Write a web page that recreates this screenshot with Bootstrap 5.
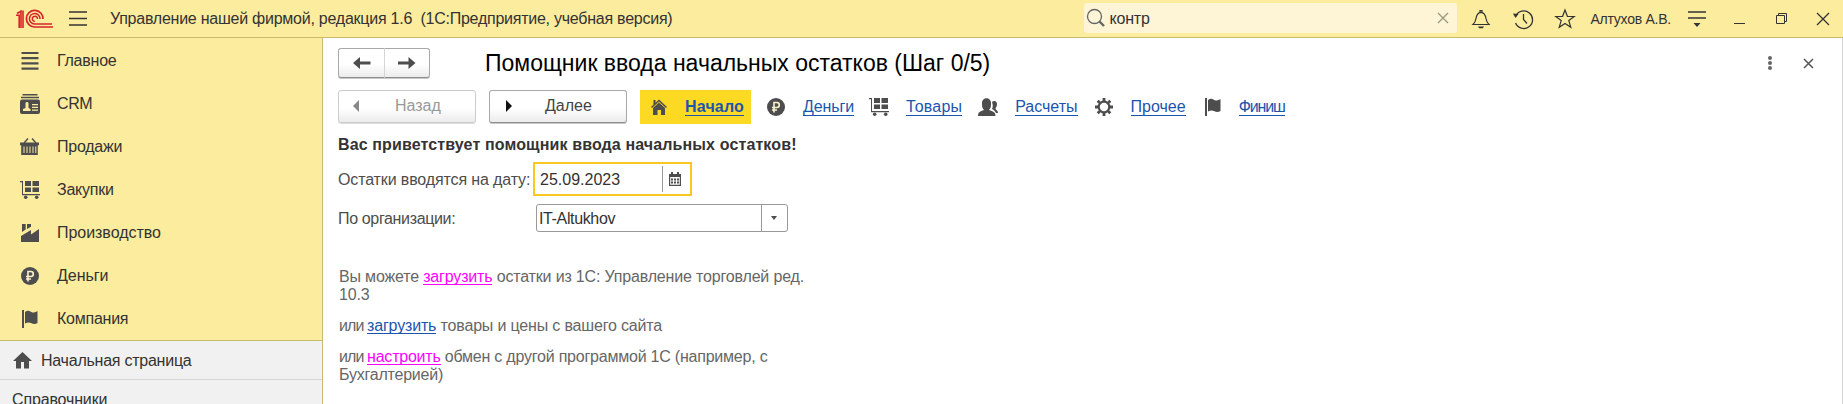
<!DOCTYPE html>
<html lang="ru">
<head>
<meta charset="utf-8">
<title>Управление нашей фирмой</title>
<link rel="stylesheet" href="https://cdn.jsdelivr.net/npm/bootstrap@5.3.0/dist/css/bootstrap.min.css">
<style>
body{font-family:"Liberation Sans",Arial,sans-serif;font-size:16px;line-height:18px;color:#333;background:#fff;height:404px;overflow:hidden}
svg{display:block;flex:none;overflow:visible}
a{color:#1c55ae}
.topbar{height:38px;background:#fbec9e;border-bottom:1px solid #c9bb6e}
.app-title{margin-left:23px;white-space:pre;letter-spacing:-.245px}
.user-name{margin-left:16px;font-size:14px;letter-spacing:-.25px;white-space:nowrap}
.searchbox{width:373px;height:30px;margin-top:3px;background:#fdf5d6;border-radius:3px;padding-left:3px;padding-right:9px}
.below{height:366px}
.side{width:323px;border-right:1px solid #c9bb6e;background:#f1f1f1;letter-spacing:-.24px}
.sections{height:303px;background:#fbec9e;border-bottom:1px solid #c9bb6e;padding-top:1px}
.sections a{height:43px;flex:none;padding-left:20px;color:#333;text-decoration:none}
.sections svg{margin-right:17px}
.sections .wide-label{letter-spacing:-.04px}
.homelink{height:39px;border-bottom:1px solid #d5d5d5;padding:1px 0 0 12px}
.work{border-right:1px solid #d4d4d4}
.page-title{margin-left:55px;font-size:23px;line-height:26px;letter-spacing:0}
.btn-face{--bs-btn-padding-x:0;--bs-btn-padding-y:0;--bs-btn-font-size:16px;--bs-btn-line-height:18px;--bs-btn-border-radius:3px;--bs-btn-color:#444;background:linear-gradient(#fff 55%,#ececec);border:1px solid #a8a8a8;border-bottom-color:#8e8e8e;box-shadow:0 1px 0 #c8c8c8}
.btn-face.disabled{opacity:1;color:#999;border-color:#ccc;box-shadow:0 1px 0 #ddd}
.arrows .btn-face{width:46px;height:30px}
.arrows .btn-face:first-child{width:47px;border-right-color:#d5d5d5}
.arrows .btn-face:last-child{border-left-color:#d5d5d5}
.step-btn{width:138px;height:33px;margin-top:-2px}
.steps{height:34px;margin-top:12px;padding-left:15px}
.steps a{text-decoration:none;border-bottom:1px solid currentColor;line-height:16px;height:17px;white-space:nowrap}
.start{width:111px;height:34px;background:#fcd922;padding-left:11px}
.greeting{margin:12px 0 0 15px;letter-spacing:.125px}
.field-row{margin:8px 0 0 15px}
.field-row label{color:#4d4d4d;letter-spacing:-.13px;white-space:nowrap;padding-top:1px}
.datebox{width:159px;height:34px;border:2px solid #f9c922}
.datebox span,.orgbox span{padding-top:1px}
.orgbox{width:252px;height:28px;border:1px solid #999;border-radius:3px;letter-spacing:-.36px}
.sep{width:1px;height:26px;background:#999}
.hint{color:#666;width:480px;margin:36px 0 0 16px;letter-spacing:-.17px}
.hint p{margin-bottom:13px}
.hint a{text-decoration:none;border-bottom:1px solid currentColor;display:inline-block;height:17px;line-height:18px}
.hint a.fresh{color:#f0f}
.hint .or{letter-spacing:-.9px}
.hint .tight{letter-spacing:-.22px}
</style>
<script src="https://cdn.jsdelivr.net/npm/bootstrap@5.3.0/dist/js/bootstrap.bundle.min.js"></script>
</head>
<body>
<svg width="0" height="0" class="position-absolute">
<defs>
<symbol id="i-coin" viewBox="0 0 18 18"><circle cx="9" cy="9" r="9" fill="#4d4d4d"/><path d="M7 14.500V4.500h2.800a2.400 2.400 0 010 5H5M5 12h5" fill="none" stroke="#fbf3cf" stroke-width="1.600"/></symbol>
<symbol id="i-cart" viewBox="0 0 20 18"><path d="M0 0h3v13h17v1.200H2V1.200H0zM5 0h6v5H5zM12.500 0H19v5h-6.500zM5 6.500h6V11H5zM12.500 6.500H19V11h-6.500z" fill="#4d4d4d"/><circle cx="5.700" cy="16.200" r="1.800" fill="#4d4d4d"/><circle cx="16.700" cy="16.200" r="1.800" fill="#4d4d4d"/></symbol>
<symbol id="i-flag" viewBox="0 0 16 18"><path d="M0 0h2v18H0zM3 2c3-2.500 5-1 6.500 0S13 2.500 15.500 1v12c-2.500 1.500-4.500 1-6.500 0s-4-.5-6 .5z" fill="#4d4d4d"/></symbol>
</defs>
</svg>
<header class="topbar d-flex align-items-center">
<svg width="37" height="18" style="margin-left:16px" viewBox="0 0 37 18" fill="none" stroke="#d9232a"><path d="M0 5.200h3.200V18M1 3.500L5 1.200V18M7 .5V18" stroke-width="1.600"/><path d="M27 9A8.300 8.300 0 1018.500 17H37" stroke-width="1.700"/><path d="M24 9a5.300 5.300 0 10-5.500 5H36M21.500 9a2.600 2.600 0 10-2.700 2.400" stroke-width="1.500"/></svg>
<svg width="18" height="15" class="ms-3" viewBox="0 0 18 15"><path d="M0 1h18M0 7.500h18M0 14h18" stroke="#333" stroke-width="1.300"/></svg>
<span class="app-title me-auto">Управление нашей фирмой, редакция 1.6  (1С:Предприятие, учебная версия)</span>
<div class="searchbox d-flex align-items-center align-self-start">
<svg width="18" height="18" viewBox="0 0 18 18" fill="none" stroke="#666"><circle cx="7.500" cy="7.500" r="7" stroke-width="1.300"/><path d="M12.500 12.500l4.500 4.500" stroke-width="2.400"/></svg>
<span class="me-auto" style="margin-left:5px;padding-top:2px;letter-spacing:-.2px">контр</span>
<svg width="10" height="10" viewBox="0 0 10 10"><path d="M0 0l10 10M10 0L0 10" stroke="#9b977f" stroke-width="1.300"/></svg>
</div>
<svg width="18" height="20" style="margin-left:15px" viewBox="0 0 18 20"><path d="M1 15.500c2-2 2.500-3 3-6S5.500 3.500 9 3.300c3.500.2 4.500 3.200 5 6.200s1 4 3 6zM8 3V1.500h2V3" fill="none" stroke="#333" stroke-width="1.200"/><path d="M6 17.500h6l-1.200 1.800H7.200z" fill="#333"/></svg>
<svg width="20" height="20" style="margin-left:23px" viewBox="0 0 20 20"><path d="M2.800 7A8.800 8.800 0 112.600 14M10.500 5v5.500l3.500 4" fill="none" stroke="#333" stroke-width="1.300"/><path d="M0 4.500l5.500.5-3 4z" fill="#333"/></svg>
<svg width="20" height="20" style="margin-left:22px" viewBox="0 0 20 20"><path d="M10 1l2.400 6.300 6.800.2-5.400 4.100 2 6.700L10 14.500l-5.800 3.800 2-6.700L.8 7.500l6.800-.2z" fill="none" stroke="#333" stroke-width="1.200"/></svg>
<span class="user-name">Алтухов А.В.</span>
<svg width="18" height="16" style="margin-left:17px" viewBox="0 0 18 16"><path d="M0 1h18M0 7h18" stroke="#333" stroke-width="1.300"/><path d="M5.500 12h7L9 16z" fill="#333"/></svg>
<svg width="11" height="10" style="margin-left:28px" viewBox="0 0 11 10"><path d="M0 9.500h11" stroke="#333"/></svg>
<svg width="11" height="11" style="margin-left:31px" viewBox="0 0 11 11"><path d="M.5 2.500h8v8h-8zM2.500 2.500v-2h8v8h-2" fill="none" stroke="#333"/></svg>
<svg width="12" height="12" style="margin-left:30px;margin-right:14px" viewBox="0 0 12 12"><path d="M0 0l12 12M12 0L0 12" stroke="#333" stroke-width="1.300"/></svg>
</header>
<div class="below d-flex">
<aside class="side flex-shrink-0">
<nav class="sections d-flex flex-column">
<a href="#" class="d-flex align-items-center"><svg width="20" height="18" viewBox="0 0 20 18"><path d="M1.500 1h17M1.500 6.200h17M1.500 11.400h17M1.500 16.600h17" stroke="#4d4d4d" stroke-width="2.200"/></svg><span>Главное</span></a>
<a href="#" class="d-flex align-items-center"><svg width="20" height="20" viewBox="0 0 20 20"><path d="M2.500.7h15M1 3.500h18" stroke="#4d4d4d" stroke-width="1.500"/><rect y="5.500" width="20" height="14.500" rx="2" fill="#4d4d4d"/><path d="M3 17v-2l2.500-1V9.500c0-2 3-2 3 0V14l2 1v2zM12 10h6v1.300h-6zM12 12.700h6V14h-6zM12 15.500h6v1.200h-6z" fill="#fbec9e"/></svg><span style="letter-spacing:-.4px">CRM</span></a>
<a href="#" class="d-flex align-items-center"><svg width="20" height="18" viewBox="0 0 20 18"><path d="M4 5l4-4.500M16 5L12 .5" stroke="#4d4d4d" stroke-width="1.400"/><path d="M0 4.500h19v2.700H0zM1.200 7h16.600v10H1.200z" fill="#4d4d4d"/><path d="M4 8.500v6.500M7 8.500v6.500M10 8.500v6.500M13 8.500v6.500M15.800 8.500v6.500" stroke="#fbec9e"/></svg><span>Продажи</span></a>
<a href="#" class="d-flex align-items-center"><svg width="20" height="18"><use href="#i-cart"/></svg><span>Закупки</span></a>
<a href="#" class="d-flex align-items-center"><svg width="20" height="18" viewBox="0 0 20 18"><path d="M1 18v-6l10-6v4.500L19 5v13zM2 0h3.700v5.500L2 8zM7 0h4v2.800L7 5z" fill="#4d4d4d"/></svg><span class="wide-label">Производство</span></a>
<a href="#" class="d-flex align-items-center"><svg width="20" height="18"><use href="#i-coin"/></svg><span class="wide-label">Деньги</span></a>
<a href="#" class="d-flex align-items-center"><svg width="20" height="18"><use href="#i-flag"/></svg><span>Компания</span></a>
</nav>
<div class="homelink d-flex align-items-center"><svg width="20" height="17" viewBox="0 0 20 17"><path d="M10.500 0l9.500 9h-3v7.500h-5V10H9v6.500H4V9H1z" fill="#4d4d4d"/></svg><span style="margin-left:9px">Начальная страница</span></div>
<div style="padding:11px 0 0 12px"><span style="letter-spacing:-.15px">Справочники</span></div>
</aside>
<main class="work flex-grow-1">
<div class="d-flex align-items-center" style="padding:10px 0 0 15px;height:40px">
<div class="btn-group arrows">
<button class="btn btn-face"><svg class="mx-auto" width="18" height="14" viewBox="0 0 18 14"><path d="M0 7l7-6v4.500h10.500v3H7V13z" fill="#4d4d4d"/></svg></button>
<button class="btn btn-face"><svg class="mx-auto" width="18" height="14" viewBox="0 0 18 14"><path d="M17.500 7l-7-6v4.500H0v3h10.500V13z" fill="#4d4d4d"/></svg></button>
</div>
<h1 class="page-title mb-0 fw-normal me-auto text-black">Помощник ввода начальных остатков (Шаг 0/5)</h1>
<svg width="4" height="14" style="margin-right:32px" viewBox="0 0 4 14" fill="#666"><circle cx="2" cy="2" r="2"/><circle cx="2" cy="7" r="2"/><circle cx="2" cy="12" r="2"/></svg>
<svg width="9" height="9" style="margin-right:29px" viewBox="0 0 9 9"><path d="M0 0l9 9M9 0L0 9" stroke="#555" stroke-width="1.500"/></svg>
</div>
<div class="steps d-flex align-items-center">
<button class="btn btn-face step-btn disabled d-flex align-items-center"><svg width="6" height="12" style="margin-left:14px" viewBox="0 0 6 12"><path d="M6 0v12L0 6z" fill="#888"/></svg><span style="margin-left:36px">Назад</span></button>
<button class="btn btn-face step-btn d-flex align-items-center" style="margin-left:13px"><svg width="6" height="12" style="margin-left:16px" viewBox="0 0 6 12"><path d="M0 0v12l6-6z" fill="#111"/></svg><span style="margin-left:33px">Далее</span></button>
<div class="start d-flex align-items-center" style="margin-left:13px"><svg width="16" height="16" viewBox="0 0 16 16" fill="#4d4d4d"><path d="M0 8l8-7.500L16 8l-1 1-7-6.500L1 9zM2 9l6-5.500L14 9v7h-4v-5H6.500v5H2zM2.500 1h2v3l-2 2z"/></svg><a href="#" class="fw-bold" style="margin-left:18px;letter-spacing:.17px">Начало</a></div>
<svg width="18" height="18" style="margin-left:16px"><use href="#i-coin"/></svg><a href="#" style="margin-left:18px;letter-spacing:-.1px">Деньги</a>
<svg width="20" height="18" style="margin-left:15px"><use href="#i-cart"/></svg><a href="#" style="margin-left:17px;letter-spacing:.17px">Товары</a>
<svg width="20" height="18" style="margin-left:16px" viewBox="0 0 20 18" fill="#4d4d4d"><path d="M0 18c0-4 2-4.500 6-6-2-2-2-4-2-7 0-6.500 9-6.500 9 0 0 3 0 5-2 7 4 1.500 6.500 2 6.500 6zM14 11c1-2 1-4 0-7 2-2 5-1 5 2 0 2-.5 3-1.500 4 0 2 2.500 2 2.500 5h-2c-1-2-2-3-4-4z"/></svg><a href="#" style="margin-left:17px">Расчеты</a>
<svg width="18" height="18" style="margin-left:17px" viewBox="-9 -9 18 18" stroke="#4d4d4d" fill="none"><circle r="5.300" stroke-width="2.200"/><path d="M0-6v-3M0 6v3M-6 0h-3M6 0h3M-4.300-4.300l-2-2M4.300-4.300l2-2M-4.300 4.300l-2 2M4.300 4.300l2 2" stroke-width="2.800"/></svg><a href="#" style="margin-left:18px">Прочее</a>
<svg width="16" height="18" style="margin-left:19px"><use href="#i-flag"/></svg><a href="#" style="margin-left:18px;letter-spacing:-1.100px">Финиш</a>
</div>
<div class="greeting fw-bold">Вас приветствует помощник ввода начальных остатков!</div>
<div class="field-row d-flex align-items-center" style="height:34px">
<label style="width:195px">Остатки вводятся на дату:</label>
<div class="datebox d-flex align-items-center"><span style="margin-left:5px;width:122px">25.09.2023</span><div class="sep"></div>
<svg width="12" height="14" style="margin-left:6px" viewBox="0 0 12 14"><path d="M.6 2.600h10.800v10.800H.6z" fill="#fff" stroke="#4d4d4d" stroke-width="1.200"/><path d="M0 2h12v3H0z" fill="#4d4d4d"/><path d="M3 0v3.500M9 0v3.500" stroke="#4d4d4d" stroke-width="2"/><path d="M2 7.500h8M2 10.500h8" stroke="#4d4d4d" stroke-width="2" stroke-dasharray="2 1"/></svg></div>
</div>
<div class="field-row d-flex align-items-center" style="height:28px">
<label style="width:198px;letter-spacing:-.35px">По организации:</label>
<div class="orgbox d-flex align-items-center"><span style="margin-left:2px;width:222px">IT-Altukhov</span><div class="sep"></div><svg width="6" height="4" style="margin-left:9px" viewBox="0 0 6 4"><path d="M0 0h6L3 4z" fill="#4d4d4d"/></svg></div>
</div>
<div class="hint">
<p>Вы можете <a href="#" class="fresh">загрузить</a> остатки из 1С: Управление торговлей ред.<br>10.3</p>
<p><span class="or">или </span><a href="#">загрузить</a> товары и цены с вашего сайта</p>
<p class="tight"><span class="or">или </span><a href="#" class="fresh">настроить</a> обмен с другой программой 1С (например, с<br>Бухгалтерией)</p>
</div>
</main>
</div>
</body>
</html>
